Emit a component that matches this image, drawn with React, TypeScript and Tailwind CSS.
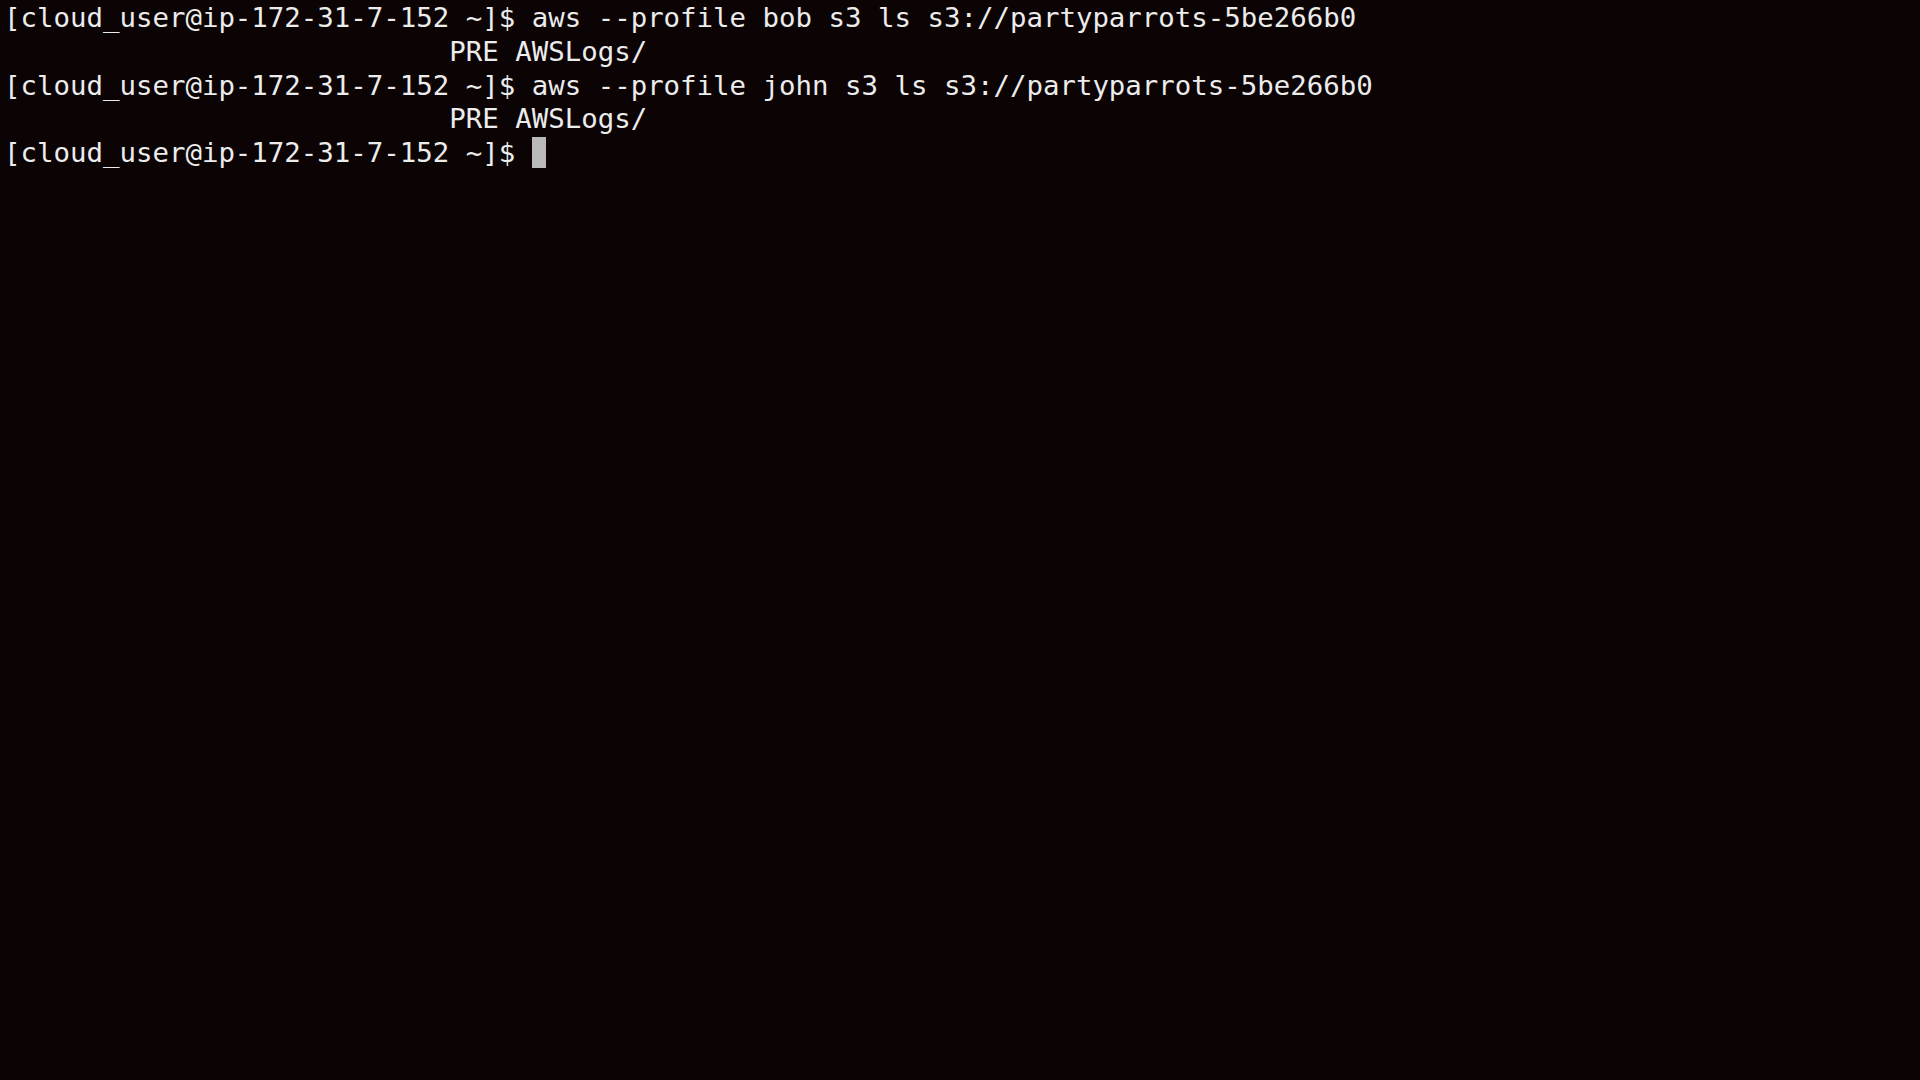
import React from 'react';

const PROMPT = '[cloud_user@ip-172-31-7-152 ~]$ ';
const INDENT = ' '.repeat(27);

const LINES: string[] = [
  PROMPT + 'aws --profile bob s3 ls s3://partyparrots-5be266b0',
  INDENT + 'PRE AWSLogs/',
  PROMPT + 'aws --profile john s3 ls s3://partyparrots-5be266b0',
  INDENT + 'PRE AWSLogs/',
];

const App: React.FC = () => {
  return (
    <div className="w-[1920px] h-[1080px] bg-[#0b0304] overflow-hidden">
      <pre className="pl-[4px] pt-[1px] text-[27.4px] leading-[33.75px] text-[#ececec] font-['DejaVu_Sans_Mono',monospace] whitespace-pre">
        {LINES.map((line, idx) => (
          <div key={idx}>{line}</div>
        ))}
        <div className="flex items-center">
          <span>{PROMPT}</span>
          <span className="inline-block w-[14px] h-[31px] bg-[#b9b9b9]" />
        </div>
      </pre>
    </div>
  );
};

export default App;
